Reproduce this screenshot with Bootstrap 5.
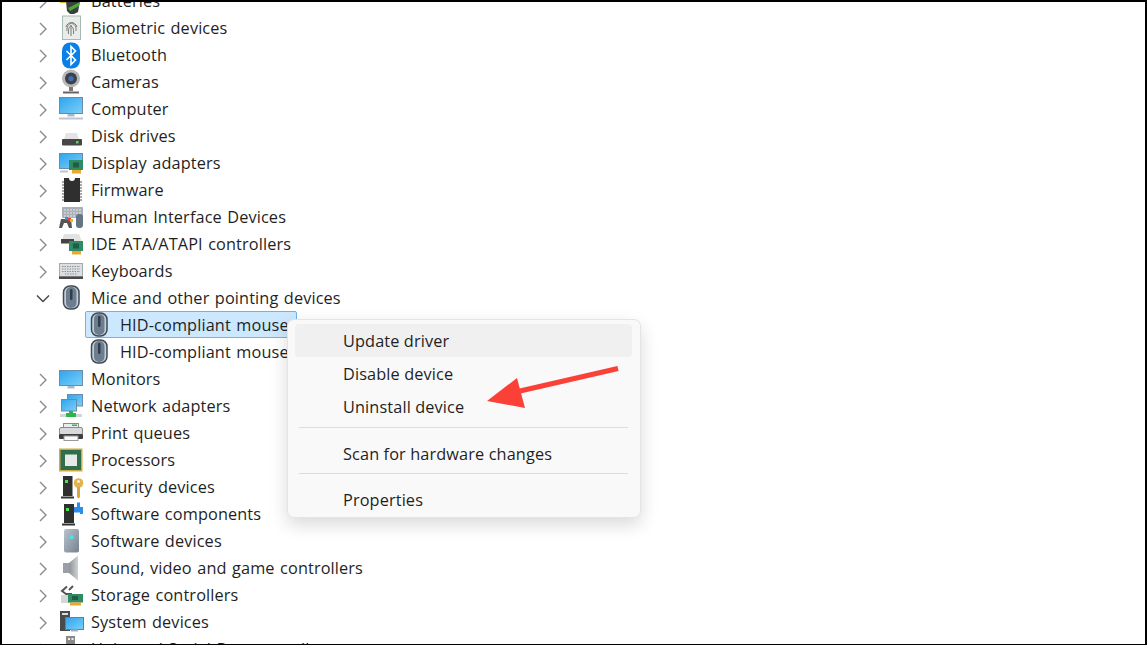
<!doctype html>
<html lang="en">
<head>
<meta charset="utf-8">
<title>Device Manager</title>
<link href="https://cdn.jsdelivr.net/npm/bootstrap@5.3.0/dist/css/bootstrap.min.css" rel="stylesheet">
<style>
html,body{height:645px;overflow:hidden;background:#fff}
body{font-family:"Open Sans","Noto Sans",sans-serif;color:#1f1f1f}
.dm-frame{height:645px;overflow:hidden;border-style:solid;border-color:#000;border-width:2px 2px 1px 2px;position:relative}
.dm-defs{position:absolute;width:0;height:0}
.dm-tree{margin-top:-14px}
.dm-row{height:27px;font-size:16.3px;line-height:27px;white-space:nowrap;letter-spacing:.12px;word-spacing:1.1px}
.dm-chev{width:18px;height:27px;margin-left:32px;flex:none}
.dm-chev-r{fill:none;stroke:#8a8a8a;stroke-width:1.4}
.dm-chev-d{fill:none;stroke:#444;stroke-width:1.4}
.dm-ico{width:26px;height:27px;margin-left:6px;flex:none}
.dm-lbl{margin-left:7px}
.dm-child{padding-left:84px;position:relative}
.dm-child .dm-ico{margin-left:0;position:relative}
.dm-child .dm-lbl{margin-left:8px;position:relative}
.dm-sel{position:absolute;left:83px;top:-1px;width:212px;height:27px;background:#cce8ff;border:1px solid #6cb4ee;border-radius:2px}
.dm-menu{position:absolute;left:285px;top:317px;width:354px;height:199px;background:#f9f9f9;border:1px solid #e4e4e4;border-radius:7px;box-shadow:0 7px 18px rgba(0,0,0,.15);padding:4px 8px 4px 7px;font-size:16.3px;letter-spacing:.12px;z-index:2}
.dm-item{height:33px;line-height:35px;padding-left:48px;border-radius:4px;white-space:nowrap}
.dm-hot{background:#f0f0f0}
.dm-sep{height:1px;background:#dcdcdc;margin:4px 4px 9px 4px}
.dm-sep-b{margin-top:3px;margin-bottom:9px}
.dm-arrow{position:absolute;left:468px;top:358px;z-index:3}
</style>
</head>
<body>
<div class="dm-frame">
<svg class="dm-defs" aria-hidden="true">
  <defs>
    <linearGradient id="g-scr" x1="0" y1="0" x2="1" y2="1"><stop offset="0" stop-color="#2fa4ee"/><stop offset="1" stop-color="#7cd0f7"/></linearGradient>
    <linearGradient id="g-tow" x1="0" y1="0" x2="1" y2="1"><stop offset="0" stop-color="#b9c3cc"/><stop offset="1" stop-color="#75828e"/></linearGradient>
    <linearGradient id="g-spk" x1="0" y1="0" x2="1" y2="0"><stop offset="0" stop-color="#8e9398"/><stop offset="1" stop-color="#d0d3d6"/></linearGradient>
    <symbol id="i-bat" viewBox="0 0 26 27"><path d="M2 13h7v2H2z" fill="#e0b928"/><path d="M8 13h14l-2 11-4 2h-4l-3-3z" fill="#3a3f3a"/><path d="M10 20l12-6-1 4-9 5z" fill="#4aa63c"/></symbol>
    <symbol id="i-bio" viewBox="0 0 26 27"><rect x="4.500" y="1" width="18" height="23.500" fill="#e8ede9" stroke="#a9bab2"/><path d="M9 16c-1-10 10-10 9 0M10.500 19c-1-11 6-10 5 0M13 10v11M8 12c2-6 9-6 11 0" stroke="#6a6a6a" stroke-width=".9" fill="none"/></symbol>
    <symbol id="i-bt" viewBox="0 0 26 27"><rect x="4" y="0.500" width="18" height="26" rx="8" fill="#0a7fe8"/><path d="M8.500 9l9 9-4.500 4.500v-18L17.500 9l-9 9" stroke="#fff" stroke-width="1.600" fill="none"/></symbol>
    <symbol id="i-cam" viewBox="0 0 26 27"><circle cx="13" cy="9.500" r="9" fill="#b8b8b8"/><circle cx="13" cy="9.500" r="6" fill="#3d4248"/><circle cx="13" cy="9.500" r="2.600" fill="#3f6fb5"/><path d="M11 18h4v4h-4z" fill="#777"/><path d="M5 23.500h16" stroke="#666" stroke-width="2"/></symbol>
    <symbol id="i-pc" viewBox="0 0 26 27"><rect x="1.500" y="1.500" width="23" height="16" fill="url(#g-scr)" stroke="#6b8ca8"/><path d="M9.500 18h7v2.500h-7z" fill="#a8bac8"/><path d="M1 22.500h24" stroke="#b7c6d2" stroke-width="2"/></symbol>
    <symbol id="i-mon" viewBox="0 0 26 27"><rect x="1.500" y="4.500" width="23" height="15" fill="url(#g-scr)" stroke="#6b8ca8"/><path d="M9.500 20h7v2.500h-7z" fill="#a8bac8"/></symbol>
    <symbol id="i-disk" viewBox="0 0 26 27"><path d="M6 16l2-6h11l2 6z" fill="#e4e4e4"/><rect x="4" y="16" width="20" height="6.500" rx="1" fill="#464646"/><rect x="18" y="18" width="2.500" height="2.500" fill="#5fd05a"/></symbol>
    <symbol id="i-disp" viewBox="0 0 26 27"><rect x="1.500" y="3.500" width="23" height="15" fill="url(#g-scr)" stroke="#6b8ca8"/><rect x="11" y="10" width="14" height="10" fill="#2e8b63"/><rect x="14" y="20" width="9" height="3.500" fill="#e8a92c"/><rect x="15" y="12.500" width="6" height="5" fill="#1f5d45"/><path d="M2 21.500h8" stroke="#b7c6d2" stroke-width="2"/></symbol>
    <symbol id="i-fw" viewBox="0 0 26 27"><path d="M4 5h3M4 8h3M4 11h3M4 14h3M4 17h3M4 20h3M4 23h3M21 5h3M21 8h3M21 11h3M21 14h3M21 17h3M21 20h3M21 23h3" stroke="#8c8c8c" stroke-width="1.500"/><path d="M6 1h5a3 3 0 0 0 6 0h5v24H6z" fill="#2f2f2f"/></symbol>
    <symbol id="i-hid" viewBox="0 0 26 27"><rect x="4" y="3" width="21" height="11" rx="1" fill="#aab0b8"/><path d="M6 6h17M6 9h17M6 12h17" stroke="#e6e8ea" stroke-dasharray="2 1"/><path d="M1 24l2-9h10l1 9h-3l-2-5H6l-2 5z" fill="#555"/><rect x="7" y="13" width="3" height="3" fill="#2f8fe0"/><rect x="10" y="14" width="3" height="3" fill="#e0442c"/><rect x="12" y="15" width="3" height="3" fill="#e8b42c"/><rect x="18" y="10" width="7" height="14" rx="3" fill="#657583"/></symbol>
    <symbol id="i-ide" viewBox="0 0 26 27"><path d="M6 3h15l3 8H3z" fill="#e2e2e2"/><rect x="3" y="8" width="13" height="4.500" fill="#444"/><rect x="11" y="10" width="14" height="10" fill="#2e8b63"/><rect x="14" y="20" width="9" height="3.500" fill="#e8a92c"/><rect x="15" y="12.500" width="6" height="5" fill="#1f5d45"/></symbol>
    <symbol id="i-kb" viewBox="0 0 26 27"><rect x="1.500" y="5.500" width="23" height="13" fill="#dcdfe2" stroke="#a4aab0"/><path d="M4 8.500h18M4 11h18M4 13.500h18M7 16h12" stroke="#8d9298" stroke-dasharray="1.500 1"/><rect x="1" y="18.500" width="24" height="2.500" fill="#4a4a4a"/></symbol>
    <symbol id="i-mouse" viewBox="0 0 26 27"><rect x="5.500" y="1" width="15.500" height="23" rx="6.500" fill="#c3ced5" stroke="#3f4a54" stroke-width="1.500"/><rect x="8" y="2" width="10.500" height="21" rx="5" fill="#6c7d90"/><rect x="12" y="4" width="2.500" height="11" rx="1.200" fill="#333d47"/></symbol>
    <symbol id="i-net" viewBox="0 0 26 27"><rect x="9.500" y="1.500" width="15" height="11.500" fill="url(#g-scr)" stroke="#6b8ca8"/><rect x="3.500" y="6.500" width="15" height="11.500" fill="url(#g-scr)" stroke="#6b8ca8"/><path d="M2 22.500h22" stroke="#cfd6dc" stroke-width="3"/><path d="M11 18h4v2h3v4H8v-4h3z" fill="#2fb34a"/></symbol>
    <symbol id="i-print" viewBox="0 0 26 27"><rect x="5.500" y="3.500" width="15" height="4" fill="#ececec" stroke="#8a8a8a"/><rect x="1.500" y="7.500" width="23" height="7" rx="1.500" fill="#d8dadc" stroke="#8a8a8a"/><rect x="14" y="4.500" width="5" height="1.500" fill="#3bb54a"/><rect x="1" y="14" width="24" height="5" rx="1" fill="#3f3f3f"/><rect x="6" y="16" width="14" height="4.500" fill="#fafafa" stroke="#999"/></symbol>
    <symbol id="i-cpu" viewBox="0 0 26 27"><rect x="1" y="1.500" width="23.500" height="23" fill="#d5a83d"/><rect x="2.500" y="3" width="20.500" height="20" fill="#2f6e4c"/><rect x="7" y="7.500" width="12" height="11.500" fill="#e8e8e8"/></symbol>
    <symbol id="i-sec" viewBox="0 0 26 27"><rect x="5" y="2" width="9.500" height="20" fill="#2f2f2f"/><rect x="7" y="6" width="3" height="3" fill="#4fe04f"/><path d="M3 23.500h13" stroke="#333" stroke-width="2"/><circle cx="20.500" cy="9" r="4.800" fill="#e3b34a"/><circle cx="20.500" cy="7.500" r="1.300" fill="#fff"/><path d="M19 13h3v10l-1.500 1.500L19 23z" fill="#d9a53c"/></symbol>
    <symbol id="i-soft" viewBox="0 0 26 27"><rect x="6" y="3" width="10" height="19" fill="#2f2f2f"/><rect x="8" y="7" width="3" height="3" fill="#4fe04f"/><path d="M4 23.500h13" stroke="#333" stroke-width="2"/><path d="M16 6h3V1.500h3V6h3v7h-3v-1.500h-6z" fill="#2e8de8"/></symbol>
    <symbol id="i-sdev" viewBox="0 0 26 27"><rect x="6" y="1" width="15" height="23.500" rx="2" fill="url(#g-tow)"/><rect x="12" y="7.500" width="3.500" height="3.500" fill="#4fe0e8"/></symbol>
    <symbol id="i-snd" viewBox="0 0 26 27"><rect x="5" y="8" width="6" height="10" fill="#9aa0a6"/><path d="M11 8l9-7.500v25L11 18z" fill="url(#g-spk)"/></symbol>
    <symbol id="i-stor" viewBox="0 0 26 27"><path d="M9 4.500L4 9l4 3h6" fill="none" stroke="#555" stroke-width="2"/><path d="M11 8l4-4" stroke="#555" stroke-width="2"/><rect x="3" y="13" width="12" height="8" fill="#d6d6d6"/><rect x="10" y="12" width="15" height="8.500" fill="#2e8b63"/><rect x="12" y="20.500" width="11" height="3" fill="#e8a92c"/><rect x="14" y="14" width="6" height="4" fill="#1f5d45"/></symbol>
    <symbol id="i-sys" viewBox="0 0 26 27"><rect x="2" y="2" width="10" height="20" fill="#4a4a4a"/><rect x="4" y="4" width="6" height="2" fill="#ddd"/><rect x="7.500" y="8.500" width="18" height="12" fill="url(#g-scr)" stroke="#5f7f9a"/><path d="M13 21.500h7" stroke="#9fb3c4" stroke-width="2"/></symbol>
    <symbol id="i-usb" viewBox="0 0 26 27"><rect x="8" y="0" width="9" height="9" fill="#8a8a8a"/><rect x="10" y="2" width="2" height="2" fill="#eee"/><rect x="13.500" y="2" width="2" height="2" fill="#eee"/><rect x="6" y="9" width="13" height="15" fill="#d8d8d8"/></symbol>
    <symbol id="c-r" viewBox="0 0 18 27"><path class="dm-chev-r" d="M6 8l6 6-6 6"/></symbol>
    <symbol id="c-d" viewBox="0 0 18 27"><path class="dm-chev-d" d="M3 10.500l6 6 6-6"/></symbol>
  </defs>
</svg>

<div class="dm-tree">
  <div class="dm-row d-flex"><svg class="dm-chev"><use href="#c-r"/></svg><svg class="dm-ico"><use href="#i-bat"/></svg><span class="dm-lbl">Batteries</span></div>
  <div class="dm-row d-flex"><svg class="dm-chev"><use href="#c-r"/></svg><svg class="dm-ico"><use href="#i-bio"/></svg><span class="dm-lbl">Biometric devices</span></div>
  <div class="dm-row d-flex"><svg class="dm-chev"><use href="#c-r"/></svg><svg class="dm-ico"><use href="#i-bt"/></svg><span class="dm-lbl">Bluetooth</span></div>
  <div class="dm-row d-flex"><svg class="dm-chev"><use href="#c-r"/></svg><svg class="dm-ico"><use href="#i-cam"/></svg><span class="dm-lbl">Cameras</span></div>
  <div class="dm-row d-flex"><svg class="dm-chev"><use href="#c-r"/></svg><svg class="dm-ico"><use href="#i-pc"/></svg><span class="dm-lbl">Computer</span></div>
  <div class="dm-row d-flex"><svg class="dm-chev"><use href="#c-r"/></svg><svg class="dm-ico"><use href="#i-disk"/></svg><span class="dm-lbl">Disk drives</span></div>
  <div class="dm-row d-flex"><svg class="dm-chev"><use href="#c-r"/></svg><svg class="dm-ico"><use href="#i-disp"/></svg><span class="dm-lbl">Display adapters</span></div>
  <div class="dm-row d-flex"><svg class="dm-chev"><use href="#c-r"/></svg><svg class="dm-ico"><use href="#i-fw"/></svg><span class="dm-lbl">Firmware</span></div>
  <div class="dm-row d-flex"><svg class="dm-chev"><use href="#c-r"/></svg><svg class="dm-ico"><use href="#i-hid"/></svg><span class="dm-lbl">Human Interface Devices</span></div>
  <div class="dm-row d-flex"><svg class="dm-chev"><use href="#c-r"/></svg><svg class="dm-ico"><use href="#i-ide"/></svg><span class="dm-lbl">IDE ATA/ATAPI controllers</span></div>
  <div class="dm-row d-flex"><svg class="dm-chev"><use href="#c-r"/></svg><svg class="dm-ico"><use href="#i-kb"/></svg><span class="dm-lbl">Keyboards</span></div>
  <div class="dm-row d-flex"><svg class="dm-chev"><use href="#c-d"/></svg><svg class="dm-ico"><use href="#i-mouse"/></svg><span class="dm-lbl">Mice and other pointing devices</span></div>
  <div class="dm-row d-flex dm-child"><span class="dm-sel"></span><svg class="dm-ico"><use href="#i-mouse"/></svg><span class="dm-lbl">HID-compliant mouse</span></div>
  <div class="dm-row d-flex dm-child"><svg class="dm-ico"><use href="#i-mouse"/></svg><span class="dm-lbl">HID-compliant mouse</span></div>
  <div class="dm-row d-flex"><svg class="dm-chev"><use href="#c-r"/></svg><svg class="dm-ico"><use href="#i-mon"/></svg><span class="dm-lbl">Monitors</span></div>
  <div class="dm-row d-flex"><svg class="dm-chev"><use href="#c-r"/></svg><svg class="dm-ico"><use href="#i-net"/></svg><span class="dm-lbl">Network adapters</span></div>
  <div class="dm-row d-flex"><svg class="dm-chev"><use href="#c-r"/></svg><svg class="dm-ico"><use href="#i-print"/></svg><span class="dm-lbl">Print queues</span></div>
  <div class="dm-row d-flex"><svg class="dm-chev"><use href="#c-r"/></svg><svg class="dm-ico"><use href="#i-cpu"/></svg><span class="dm-lbl">Processors</span></div>
  <div class="dm-row d-flex"><svg class="dm-chev"><use href="#c-r"/></svg><svg class="dm-ico"><use href="#i-sec"/></svg><span class="dm-lbl">Security devices</span></div>
  <div class="dm-row d-flex"><svg class="dm-chev"><use href="#c-r"/></svg><svg class="dm-ico"><use href="#i-soft"/></svg><span class="dm-lbl">Software components</span></div>
  <div class="dm-row d-flex"><svg class="dm-chev"><use href="#c-r"/></svg><svg class="dm-ico"><use href="#i-sdev"/></svg><span class="dm-lbl">Software devices</span></div>
  <div class="dm-row d-flex"><svg class="dm-chev"><use href="#c-r"/></svg><svg class="dm-ico"><use href="#i-snd"/></svg><span class="dm-lbl">Sound, video and game controllers</span></div>
  <div class="dm-row d-flex"><svg class="dm-chev"><use href="#c-r"/></svg><svg class="dm-ico"><use href="#i-stor"/></svg><span class="dm-lbl">Storage controllers</span></div>
  <div class="dm-row d-flex"><svg class="dm-chev"><use href="#c-r"/></svg><svg class="dm-ico"><use href="#i-sys"/></svg><span class="dm-lbl">System devices</span></div>
  <div class="dm-row d-flex"><svg class="dm-chev"><use href="#c-r"/></svg><svg class="dm-ico"><use href="#i-usb"/></svg><span class="dm-lbl">Universal Serial Bus controllers</span></div>
</div>

<div class="dm-menu">
  <div class="dm-item dm-hot">Update driver</div>
  <div class="dm-item">Disable device</div>
  <div class="dm-item">Uninstall device</div>
  <div class="dm-sep"></div>
  <div class="dm-item">Scan for hardware changes</div>
  <div class="dm-sep dm-sep-b"></div>
  <div class="dm-item">Properties</div>
</div>
<svg class="dm-arrow" width="160" height="60" viewBox="470 360 160 60"><path d="M618 368.500L520 391" stroke="#fb4137" stroke-width="5" fill="none"/><path d="M487 401L517 378L525 408Z" fill="#fb4137"/></svg>
</div>
</body>
</html>
